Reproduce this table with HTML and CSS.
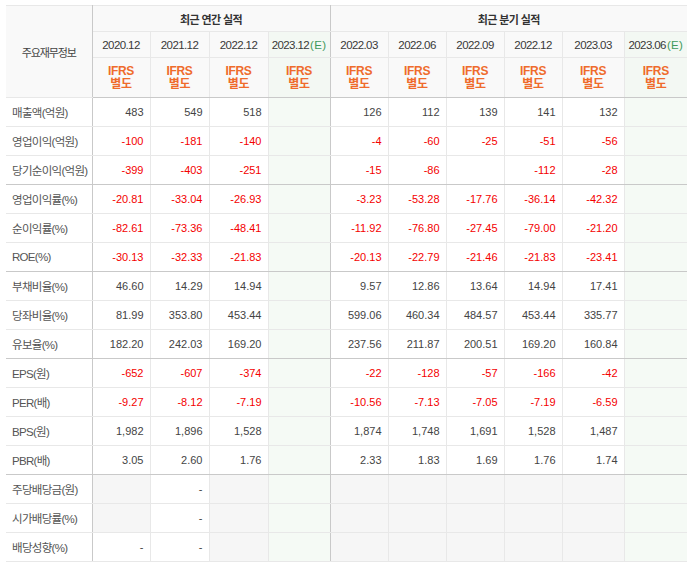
FILE: index.html
```html
<!DOCTYPE html>
<html lang="ko">
<head>
<meta charset="utf-8">
<title>주요재무정보</title>
<link rel="stylesheet" href="styles.css">
</head>
<body>
<table class="fin">
  <colgroup>
    <col class="c-label"><col class="c-a"><col class="c-b"><col class="c-b"><col class="c-e">
    <col class="c-q"><col class="c-q"><col class="c-q"><col class="c-q"><col class="c-e"><col class="c-last">
  </colgroup>
  <thead>
    <tr class="h1">
      <th class="title first" rowspan="3">주요재무정보</th>
      <th class="grp split" colspan="4">최근 연간 실적</th>
      <th class="grp" colspan="6">최근 분기 실적</th>
    </tr>
    <tr class="h2">
      <th class="date">2020.12</th>
      <th class="date">2021.12</th>
      <th class="date">2022.12</th>
      <th class="date est split">2023.12<span class="e">(E)</span></th>
      <th class="date">2022.03</th>
      <th class="date">2022.06</th>
      <th class="date">2022.09</th>
      <th class="date">2022.12</th>
      <th class="date">2023.03</th>
      <th class="date est last">2023.06<span class="e">(E)</span></th>
    </tr>
    <tr class="h3 sep">
      <th class="ifrs">IFRS<br>별도</th>
      <th class="ifrs">IFRS<br>별도</th>
      <th class="ifrs">IFRS<br>별도</th>
      <th class="ifrs est split">IFRS<br>별도</th>
      <th class="ifrs">IFRS<br>별도</th>
      <th class="ifrs">IFRS<br>별도</th>
      <th class="ifrs">IFRS<br>별도</th>
      <th class="ifrs">IFRS<br>별도</th>
      <th class="ifrs">IFRS<br>별도</th>
      <th class="ifrs est last">IFRS<br>별도</th>
    </tr>
  </thead>
  <tbody>
    <tr>
      <th class="lbl first">매출액(억원)</th>
      <td>483</td><td>549</td><td>518</td><td class="est split"></td>
      <td>126</td><td>112</td><td>139</td><td>141</td><td>132</td><td class="est last"></td>
    </tr>
    <tr>
      <th class="lbl first">영업이익(억원)</th>
      <td class="neg">-100</td><td class="neg">-181</td><td class="neg">-140</td><td class="est split"></td>
      <td class="neg">-4</td><td class="neg">-60</td><td class="neg">-25</td><td class="neg">-51</td><td class="neg">-56</td><td class="est last"></td>
    </tr>
    <tr class="sep">
      <th class="lbl first">당기순이익(억원)</th>
      <td class="neg">-399</td><td class="neg">-403</td><td class="neg">-251</td><td class="est split"></td>
      <td class="neg">-15</td><td class="neg">-86</td><td></td><td class="neg">-112</td><td class="neg">-28</td><td class="est last"></td>
    </tr>
    <tr>
      <th class="lbl first">영업이익률(%)</th>
      <td class="neg">-20.81</td><td class="neg">-33.04</td><td class="neg">-26.93</td><td class="est split"></td>
      <td class="neg">-3.23</td><td class="neg">-53.28</td><td class="neg">-17.76</td><td class="neg">-36.14</td><td class="neg">-42.32</td><td class="est last"></td>
    </tr>
    <tr>
      <th class="lbl first">순이익률(%)</th>
      <td class="neg">-82.61</td><td class="neg">-73.36</td><td class="neg">-48.41</td><td class="est split"></td>
      <td class="neg">-11.92</td><td class="neg">-76.80</td><td class="neg">-27.45</td><td class="neg">-79.00</td><td class="neg">-21.20</td><td class="est last"></td>
    </tr>
    <tr class="sep">
      <th class="lbl first">ROE(%)</th>
      <td class="neg">-30.13</td><td class="neg">-32.33</td><td class="neg">-21.83</td><td class="est split"></td>
      <td class="neg">-20.13</td><td class="neg">-22.79</td><td class="neg">-21.46</td><td class="neg">-21.83</td><td class="neg">-23.41</td><td class="est last"></td>
    </tr>
    <tr>
      <th class="lbl first">부채비율(%)</th>
      <td>46.60</td><td>14.29</td><td>14.94</td><td class="est split"></td>
      <td>9.57</td><td>12.86</td><td>13.64</td><td>14.94</td><td>17.41</td><td class="est last"></td>
    </tr>
    <tr>
      <th class="lbl first">당좌비율(%)</th>
      <td>81.99</td><td>353.80</td><td>453.44</td><td class="est split"></td>
      <td>599.06</td><td>460.34</td><td>484.57</td><td>453.44</td><td>335.77</td><td class="est last"></td>
    </tr>
    <tr class="sep">
      <th class="lbl first">유보율(%)</th>
      <td>182.20</td><td>242.03</td><td>169.20</td><td class="est split"></td>
      <td>237.56</td><td>211.87</td><td>200.51</td><td>169.20</td><td>160.84</td><td class="est last"></td>
    </tr>
    <tr>
      <th class="lbl first">EPS(원)</th>
      <td class="neg">-652</td><td class="neg">-607</td><td class="neg">-374</td><td class="est split"></td>
      <td class="neg">-22</td><td class="neg">-128</td><td class="neg">-57</td><td class="neg">-166</td><td class="neg">-42</td><td class="est last"></td>
    </tr>
    <tr>
      <th class="lbl first">PER(배)</th>
      <td class="neg">-9.27</td><td class="neg">-8.12</td><td class="neg">-7.19</td><td class="est split"></td>
      <td class="neg">-10.56</td><td class="neg">-7.13</td><td class="neg">-7.05</td><td class="neg">-7.19</td><td class="neg">-6.59</td><td class="est last"></td>
    </tr>
    <tr>
      <th class="lbl first">BPS(원)</th>
      <td>1,982</td><td>1,896</td><td>1,528</td><td class="est split"></td>
      <td>1,874</td><td>1,748</td><td>1,691</td><td>1,528</td><td>1,487</td><td class="est last"></td>
    </tr>
    <tr class="sep">
      <th class="lbl first">PBR(배)</th>
      <td>3.05</td><td>2.60</td><td>1.76</td><td class="est split"></td>
      <td>2.33</td><td>1.83</td><td>1.69</td><td>1.76</td><td>1.74</td><td class="est last"></td>
    </tr>
    <tr>
      <th class="lbl first">주당배당금(원)</th>
      <td class="nil"></td><td>-</td><td class="nil"></td><td class="est split"></td>
      <td class="nil"></td><td class="nil"></td><td class="nil"></td><td class="nil"></td><td class="nil"></td><td class="est last"></td>
    </tr>
    <tr>
      <th class="lbl first">시가배당률(%)</th>
      <td class="nil"></td><td>-</td><td class="nil"></td><td class="est split"></td>
      <td class="nil"></td><td class="nil"></td><td class="nil"></td><td class="nil"></td><td class="nil"></td><td class="est last"></td>
    </tr>
    <tr>
      <th class="lbl first">배당성향(%)</th>
      <td>-</td><td>-</td><td class="nil"></td><td class="est split"></td>
      <td class="nil"></td><td class="nil"></td><td class="nil"></td><td class="nil"></td><td class="nil"></td><td class="est last"></td>
    </tr>
  </tbody>
</table>
</body>
</html>
```

FILE: styles.css
```css
html, body {
  background: #ffffff;
}
body {
  margin: 5px 0 0 6px;
  font-family: "Liberation Sans", "Noto Sans CJK KR", sans-serif;
  color: #444;
}
.fin {
  border-collapse: collapse;
  table-layout: fixed;
  width: 681px;
  border-top: 1px solid #c9c9c9;
  border-bottom: 1px solid #c9c9c9;
}
.c-label { width: 86px; }
.c-a { width: 58px; }
.c-b { width: 59px; }
.c-e { width: 62px; }
.c-q { width: 58px; }
.c-last { width: 63px; }

.fin th, .fin td {
  border: 1px solid #e8e8e8;
  padding: 0;
  font-weight: normal;
}
.fin .first { border-left: none; border-right: 1px solid #c9c9c9; }
.fin .split { border-right: 1px solid #c9c9c9; }
.fin .last { border-right: none; }
.fin .grp:last-child { border-right: none; }

.fin thead th {
  background: #f9f9f9;
  text-align: center;
}
.h1 { height: 26px; }
.h2 { height: 26px; }
.h3 { height: 40px; }
.fin tbody tr { height: 29px; }

.fin tr.sep > th, .fin tr.sep > td {
  border-bottom: 1px solid #c9c9c9;
}

.title {
  font-family: "Noto Sans CJK KR", sans-serif;
  font-size: 11px;
  letter-spacing: -1.1px;
  color: #444;
  font-weight: 500;
}
.grp {
  font-family: "Noto Sans CJK KR", sans-serif;
  font-size: 11px;
  font-weight: bold !important;
  letter-spacing: -0.6px;
  color: #333;
}
.date {
  font-size: 11.5px;
  letter-spacing: -0.6px;
  color: #383838;
}
.date .e {
  color: #3f9a5c;
  letter-spacing: 0.3px;
  margin-left: 1px;
}
.ifrs {
  font-size: 12px;
  line-height: 13px;
  font-weight: bold !important;
  color: #ef6b2c;
  letter-spacing: -0.3px;
}
.fin thead th.est {
  background: #f3f8f3;
}
.lbl {
  text-align: left;
  padding-left: 6px !important;
  font-size: 11.5px;
  letter-spacing: -0.7px;
  color: #555;
  background: #fff;
  white-space: nowrap;
}
.fin tbody td {
  text-align: right;
  padding-right: 6px;
  font-size: 11px;
  color: #444;
}
.fin tbody td.neg { color: #f40000; }
.fin tbody td.est { background: #f5faf5; }
.fin tbody td.nil { background: #f6f6f6; }
```
